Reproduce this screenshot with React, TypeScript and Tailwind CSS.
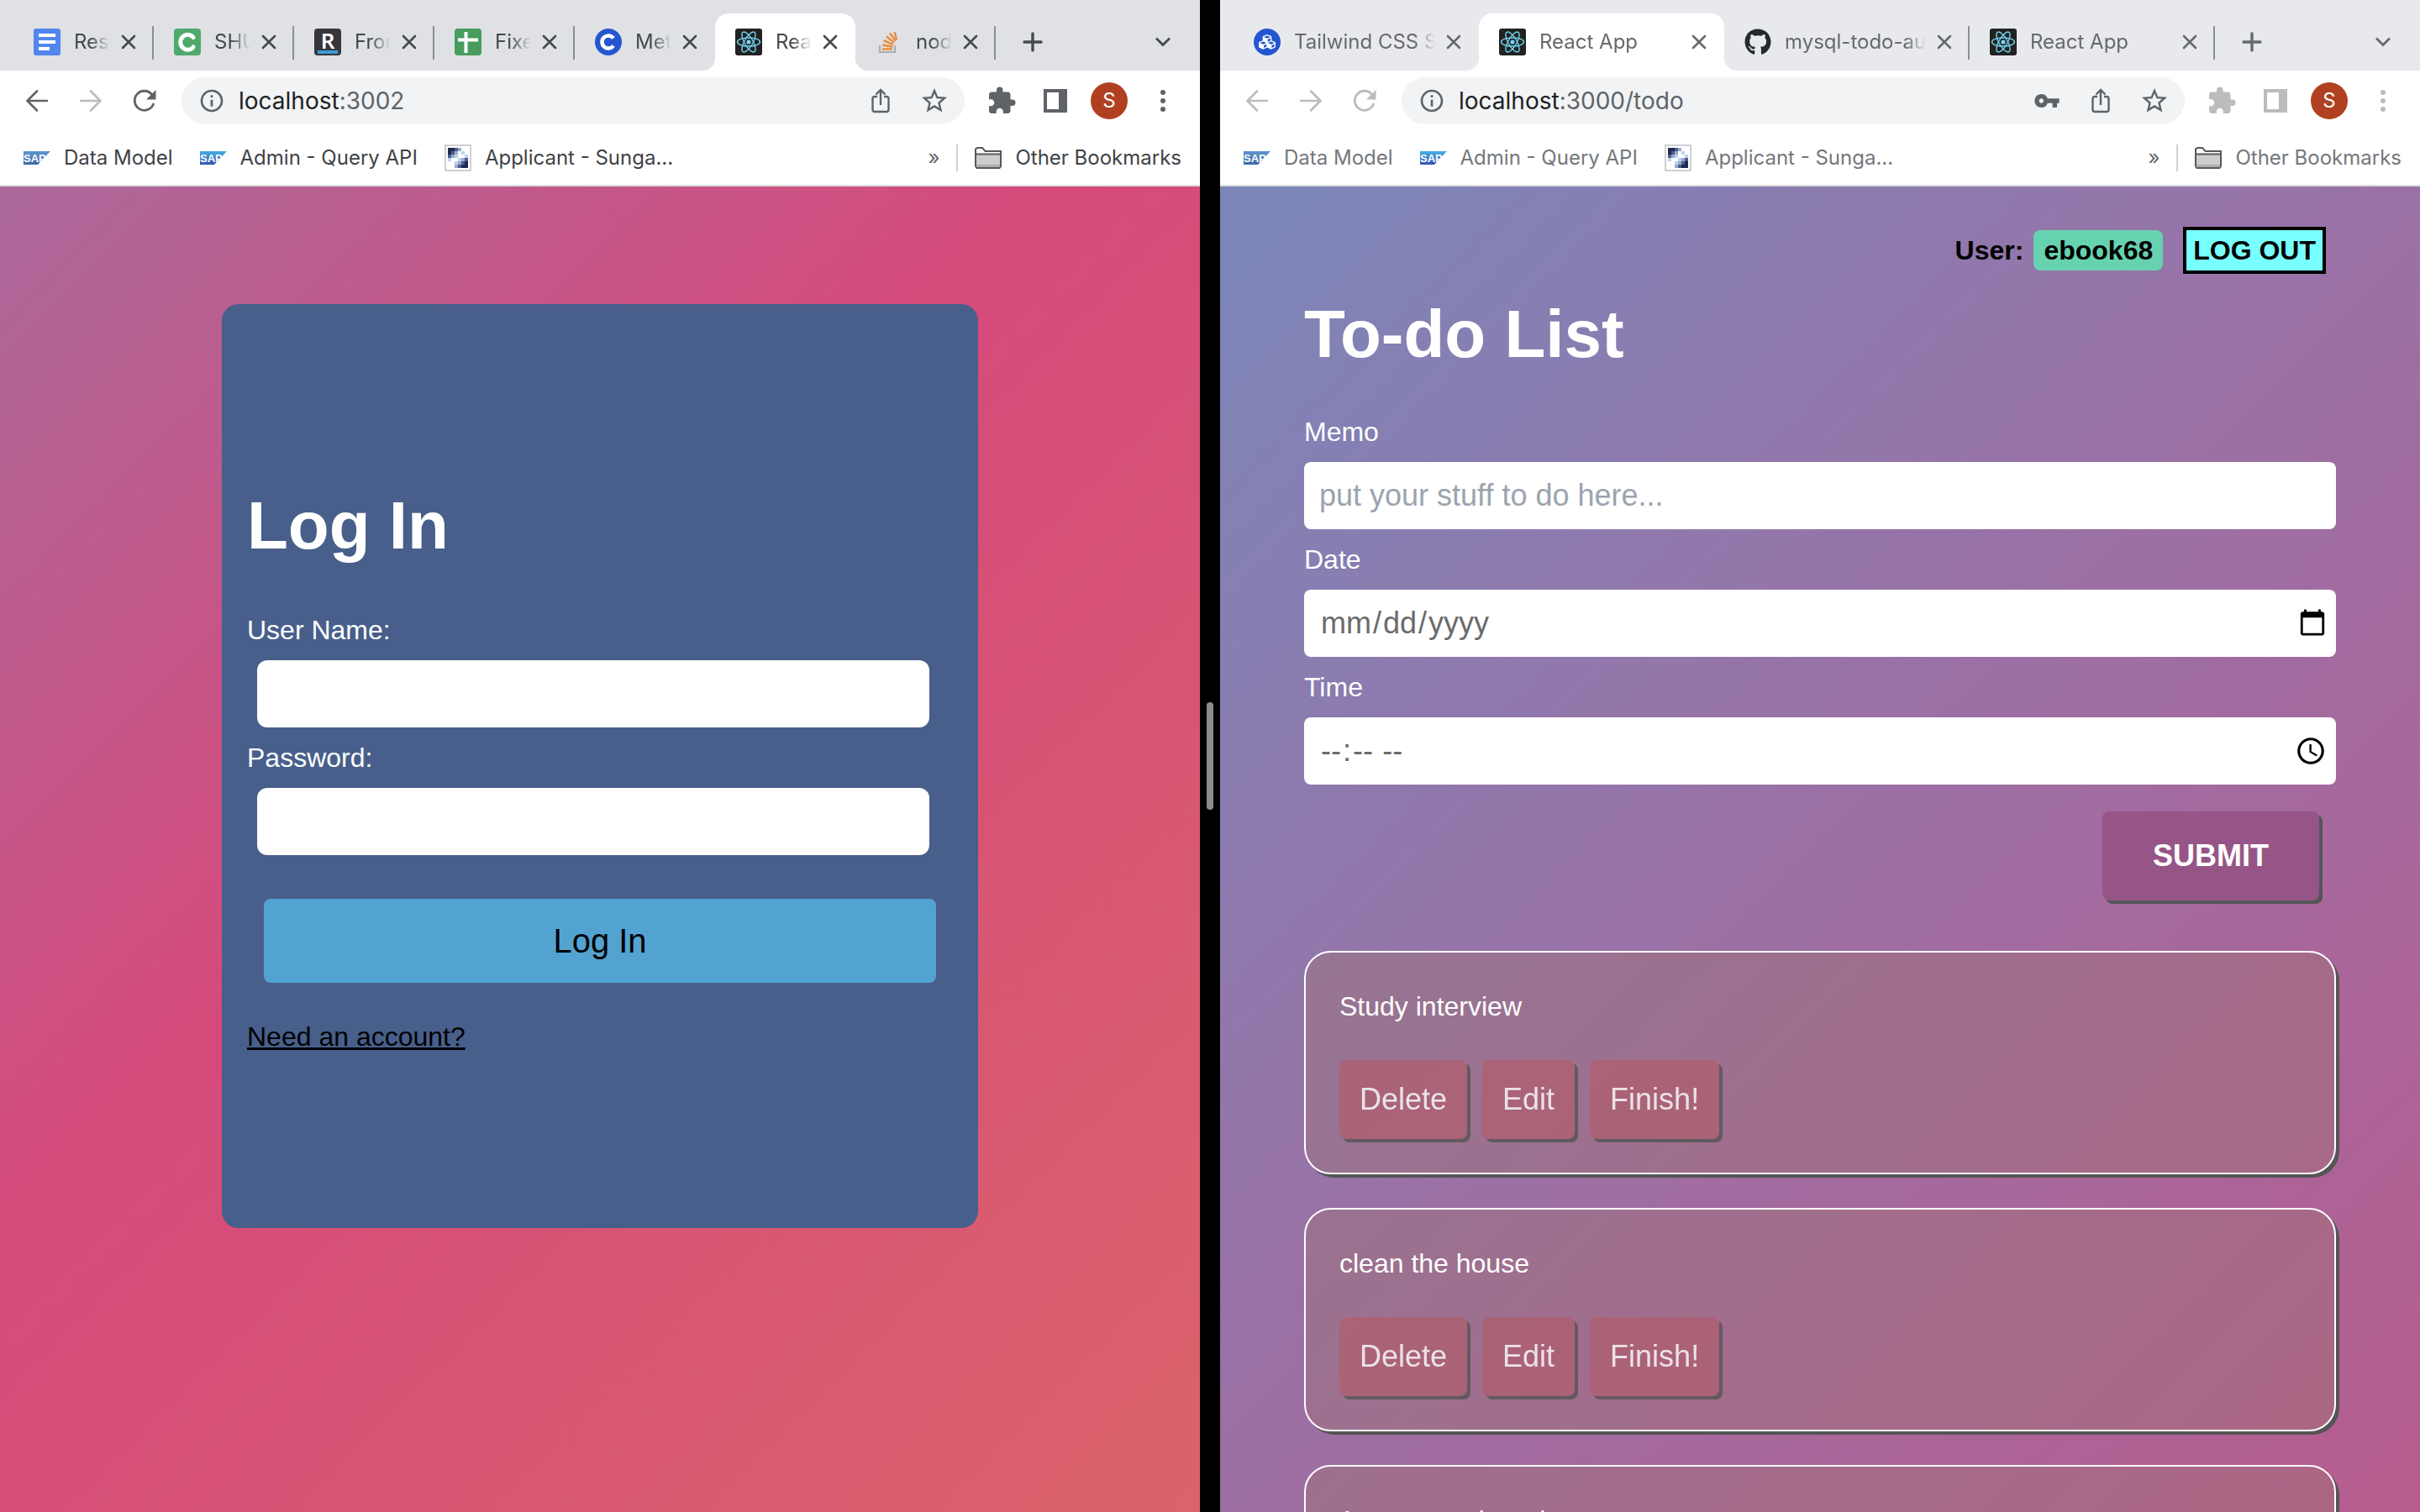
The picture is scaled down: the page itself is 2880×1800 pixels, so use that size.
import type { ReactNode } from "react";
import { FaCubes, FaGithub } from "react-icons/fa";
import { MdExtension, MdInfoOutline, MdStarBorder, MdVpnKey } from "react-icons/md";

type Tab = { title: string; icon: ReactNode; active?: boolean; divider?: boolean };

/* ---------- favicons ---------- */

function DocsIcon() {
  return (
    <svg viewBox="0 0 32 32" className="size-8">
      <rect width="32" height="32" rx="3" fill="#5286ec" />
      <path d="M6 8h20M6 16h20M6 24h13" stroke="#fff" strokeWidth="4" />
    </svg>
  );
}

function GreenCIcon() {
  return (
    <svg viewBox="0 0 32 32" className="size-8">
      <rect width="32" height="32" rx="4" fill="#50a96c" />
      <path d="M23 10.5A8.6 9 0 1 0 23 22" fill="none" stroke="#fff" strokeWidth="5" strokeLinecap="round" />
    </svg>
  );
}

function RIcon() {
  return (
    <span className="flex size-8 flex-col items-center justify-center rounded-sm bg-[#35373b] font-['Noto_Sans',sans-serif] text-[26px] leading-6 font-semibold text-white">
      R
      <span className="h-1 w-6 bg-[#3f9ad6]" />
    </span>
  );
}

function SheetIcon() {
  return (
    <svg viewBox="0 0 32 32" className="size-8">
      <rect width="32" height="32" rx="4" fill="#489c5e" />
      <path d="M13.500 4v25M4 13.500h24" stroke="#fff" strokeWidth="4" />
    </svg>
  );
}

function BlueCIcon() {
  return (
    <svg viewBox="0 0 32 32" className="size-8">
      <circle cx="16" cy="16" r="16" fill="#2456cf" />
      <path d="M22 11.500A7.500 7.500 0 1 0 22 20.500" fill="none" stroke="#fff" strokeWidth="4.500" />
    </svg>
  );
}

function ReactIcon() {
  return (
    <svg viewBox="0 0 32 32" className="size-8">
      <rect width="32" height="32" rx="3" fill="#222" />
      <g fill="none" stroke="#73d5f4" strokeWidth="1.400">
        <ellipse cx="16" cy="16" rx="13.500" ry="5" />
        <ellipse cx="16" cy="16" rx="13.500" ry="5" transform="rotate(60 16 16)" />
        <ellipse cx="16" cy="16" rx="13.500" ry="5" transform="rotate(120 16 16)" />
      </g>
      <circle cx="16" cy="16" r="2.600" fill="#73d5f4" />
    </svg>
  );
}

function StackIcon() {
  return (
    <svg viewBox="0 0 32 32" className="size-8" fill="none">
      <path d="M5 20v8h18v-8" stroke="#a9adb2" strokeWidth="2.200" />
      <g stroke="#ea8c3c" strokeWidth="2.400">
        <path d="M8 24.500h12" />
        <path d="M8.300 19.500l12 2.300" />
        <path d="M9.600 14.200l11.200 5" />
        <path d="M12.800 9.200l9.200 7.600" />
        <path d="M17 5.600l7 9.200" />
        <path d="M22.500 4l2.700 9.500" />
      </g>
    </svg>
  );
}

function CubesIcon() {
  return (
    <span className="flex size-8 items-center justify-center rounded-full bg-[#2456cf] text-white">
      <FaCubes className="size-5" />
    </span>
  );
}

/* ---------- toolbar icons ---------- */

function Arrow({ back }: { back?: boolean }) {
  return (
    <svg viewBox="0 0 28 28" className="size-7" fill="none" stroke="currentColor" strokeWidth="2.600" strokeLinecap="round">
      {back ? <path d="M26 14H3M14 2.500L2.500 14L14 25.500" /> : <path d="M2 14h23M14 2.500L25.500 14L14 25.500" />}
    </svg>
  );
}

function Reload() {
  return (
    <svg viewBox="0 0 28 28" className="size-7" fill="none">
      <path d="M24.500 18A11.500 11.500 0 1 1 22.800 6.600" stroke="currentColor" strokeWidth="2.800" strokeLinecap="round" />
      <path d="M27.500 1v11.500H16z" fill="currentColor" />
    </svg>
  );
}

function Share() {
  return (
    <svg viewBox="0 0 24 30" className="h-[30px] w-6" fill="none" stroke="currentColor" strokeWidth="2.400">
      <path d="M8 10H5a2.500 2.500 0 0 0-2.500 2.500v13A2.500 2.500 0 0 0 5 28h14a2.500 2.500 0 0 0 2.500-2.500v-13A2.500 2.500 0 0 0 19 10h-3" />
      <path d="M12 20V2.500M6.500 7.500L12 2l5.500 5.500" />
    </svg>
  );
}

function SidePanel() {
  return (
    <svg viewBox="0 0 28 28" className="size-7">
      <path fill="currentColor" fillRule="evenodd" d="M0 0h28v28H0zM4 4v20h14V4z" />
    </svg>
  );
}

function Dots() {
  return (
    <svg viewBox="0 0 28 28" className="size-7" fill="currentColor">
      <circle cx="14" cy="4" r="3" />
      <circle cx="14" cy="14" r="3" />
      <circle cx="14" cy="24" r="3" />
    </svg>
  );
}

/* ---------- bookmark icons ---------- */

function Sap({ id, rough }: { id: string; rough?: boolean }) {
  return (
    <svg viewBox="0 0 32 16" className="h-4 w-8">
      <defs>
        <linearGradient id={id} x1="0" y1="0" x2="0" y2="1">
          <stop offset="0" stopColor={rough ? "#5f95cf" : "#45b0e6"} />
          <stop offset="1" stopColor={rough ? "#3f68a6" : "#3553b0"} />
        </linearGradient>
      </defs>
      <path d="M0 0h32L17 16H0z" fill={`url(#${id})`} />
      <text x="0" y="13" fontFamily="Liberation Sans, sans-serif" fontWeight="700" fontSize="13" fill="#fff">
        SAP
      </text>
    </svg>
  );
}

const MOSAIC = ["443200", "432010", "321001", "100123", "001234", "002344"];
const MOSAIC_FILL = ["#ffffff", "#b9d3f0", "#9aa9c9", "#4a5f92", "#1f2b52"];

function Mosaic() {
  return (
    <svg viewBox="0 0 32 32" className="size-8">
      <rect x="1" y="1" width="30" height="30" fill="#fff" stroke="#cfd0d2" strokeWidth="2" />
      {MOSAIC.flatMap((row, y) =>
        [...row].map((c, x) => (
          <rect key={`${x}-${y}`} x={4 + x * 4} y={4 + y * 4} width="4" height="4" fill={MOSAIC_FILL[Number(c)]} />
        )),
      )}
    </svg>
  );
}

function Folder() {
  return (
    <svg viewBox="0 0 32 26" className="h-[26px] w-8">
      <path d="M1 23V2.500L3 1h6l3.500 4H31v18l-1.500 2H2.500z" fill="#fff" stroke="#55585c" strokeWidth="2" />
      <path d="M2 9h28v12H2z" fill="#cdcdcd" />
      <path d="M2 21h28v3H2z" fill="#aeaeae" />
      <path d="M1 8.500h30" stroke="#55585c" strokeWidth="2" />
    </svg>
  );
}

/* ---------- browser chrome ---------- */

function IconButton({ label, children, className = "" }: { label: string; children: ReactNode; className?: string }) {
  return (
    <button type="button" aria-label={label} className={`flex h-14 w-16 shrink-0 items-center justify-center ${className}`}>
      {children}
    </button>
  );
}

function BrowserTab({ tab, widthClass }: { tab: Tab; widthClass: string }) {
  return (
    <li
      className={`relative flex h-[68px] items-center pr-[18px] pl-6 ${widthClass} ${
        tab.active
          ? "rounded-t-2xl bg-white before:absolute before:bottom-0 before:-left-4 before:size-4 before:bg-[radial-gradient(circle_at_0_0,transparent_16px,white_17px)] after:absolute after:-right-4 after:bottom-0 after:size-4 after:bg-[radial-gradient(circle_at_100%_0,transparent_16px,white_17px)]"
          : ""
      }`}
    >
      <span className="shrink-0">{tab.icon}</span>
      <span className="mr-2.5 ml-4 min-w-0 flex-1 overflow-hidden whitespace-nowrap [mask-image:linear-gradient(to_right,black_calc(100%-24px),transparent)]">
        {tab.title}
      </span>
      <button type="button" aria-label={`Close ${tab.title}`} className="flex size-6 shrink-0 items-center justify-center">
        <svg viewBox="0 0 18 18" className="size-[18px]" stroke="currentColor" strokeWidth="2.600" strokeLinecap="round">
          <path d="M2 2l14 14M16 2L2 16" />
        </svg>
      </button>
      {tab.divider && <span className="absolute top-[15px] right-0 h-10 w-0.5 bg-[#8b8e92]" />}
    </li>
  );
}

type BrowserProps = {
  focused?: boolean;
  tabs: Tab[];
  tabWidth: string;
  host: string;
  path: string;
  hasKey?: boolean;
  idPrefix: string;
  children: ReactNode;
};

function Browser({ focused, tabs, tabWidth, host, path, hasKey, idPrefix, children }: BrowserProps) {
  const dim = focused ? "text-[#5f6368]" : "text-[#babcbe]";
  return (
    <section className="flex h-full min-w-0 flex-1 flex-col overflow-hidden bg-white font-['Inter',sans-serif]">
      <div
        className={`flex h-[84px] shrink-0 items-end pr-3 pl-4 text-2xl ${
          focused ? "bg-[#dfe1e5] text-[#45494d]" : "bg-[#e8e9ed] text-[#66696d]"
        }`}
      >
        <ul className="flex">
          {tabs.map((tab, i) => (
            <BrowserTab key={i} tab={tab} widthClass={tabWidth} />
          ))}
        </ul>
        <div className="flex h-[68px] flex-1 items-center justify-between pl-3">
          <IconButton label="New tab">
            <svg viewBox="0 0 24 24" className="size-6" stroke="currentColor" strokeWidth="3.400" strokeLinecap="round">
              <path d="M12 2v20M2 12h20" />
            </svg>
          </IconButton>
          <IconButton label="Search tabs">
            <svg viewBox="0 0 20 12" className="h-3 w-5" fill="none" stroke="currentColor" strokeWidth="2.800">
              <path d="M2 1.500l8 8 8-8" />
            </svg>
          </IconButton>
        </div>
      </div>

      <div className={`flex h-[72px] shrink-0 items-center gap-3 px-3 ${dim}`}>
        <div className="flex">
          <IconButton label="Back">
            <Arrow back />
          </IconButton>
          <IconButton label="Forward" className="text-[#babcbe]">
            <Arrow />
          </IconButton>
          <IconButton label="Reload">
            <Reload />
          </IconButton>
        </div>
        <div className="flex h-14 min-w-0 flex-1 items-center rounded-full bg-[#f1f3f4] px-1 text-[#5f6368]">
          <IconButton label="Site information">
            <MdInfoOutline className="size-8" />
          </IconButton>
          <span className="flex-1 text-[28px] leading-9">
            <span className="text-[#202124]">{host}</span>
            {path}
          </span>
          {hasKey && (
            <IconButton label="Passwords">
              <MdVpnKey className="size-8" />
            </IconButton>
          )}
          <IconButton label="Share">
            <Share />
          </IconButton>
          <IconButton label="Bookmark this page">
            <MdStarBorder className="size-9" />
          </IconButton>
        </div>
        <div className="flex">
          <IconButton label="Extensions">
            <MdExtension className="size-9" />
          </IconButton>
          <IconButton label="Side panel">
            <SidePanel />
          </IconButton>
          <IconButton label="Profile">
            <span className="flex size-11 items-center justify-center rounded-full bg-[#b04120] text-2xl text-white">S</span>
          </IconButton>
          <IconButton label="Menu">
            <Dots />
          </IconButton>
        </div>
      </div>

      <nav
        className={`flex h-[66px] shrink-0 items-center gap-8 border-b-2 border-[#dcdee1] pr-[22px] pl-7 text-2xl ${
          focused ? "text-[#3f4246]" : "text-[#74777b]"
        }`}
      >
        <a href="#data-model" className="flex items-center gap-4">
          <Sap id={`${idPrefix}-sap-a`} rough />
          Data Model
        </a>
        <a href="#admin" className="flex items-center gap-4">
          <Sap id={`${idPrefix}-sap-b`} />
          Admin - Query API
        </a>
        <a href="#applicant" className="flex flex-1 items-center gap-4 whitespace-nowrap">
          <Mosaic />
          Applicant - Sunga...
        </a>
        <div className="flex items-center gap-5">
          <button type="button" aria-label="More bookmarks" className="text-[#5f6368]">
            »
          </button>
          <span className="h-8 w-0.5 bg-[#cfd1d4]" />
          <a href="#other" className="flex items-center gap-4">
            <Folder />
            Other Bookmarks
          </a>
        </div>
      </nav>

      {children}
    </section>
  );
}

/* ---------- pages ---------- */

function LoginPage() {
  const field = "mx-3 my-3 h-20 w-[800px] max-w-full rounded-xl bg-white px-4 text-4xl text-black";
  return (
    <main className="flex flex-1 flex-col items-center bg-[linear-gradient(135deg,#ab699b_0%,#d64a7b_42%,#da646a_100%)] pt-[140px] font-['Liberation_Sans',Arial,sans-serif] text-[32px] leading-[48px] text-white">
      <form className="flex min-h-[1100px] w-[900px] flex-col items-start justify-center rounded-[20px] bg-[#485f8b] px-[30px]">
        <h1 className="mb-10 py-5 text-[80px] leading-[80px] font-bold">Log In</h1>
        <label htmlFor="username">User Name:</label>
        <input id="username" type="text" className={field} />
        <label htmlFor="password">Password:</label>
        <input id="password" type="password" className={field} />
        <button type="button" className="my-10 h-[100px] w-[800px] self-center rounded-lg bg-[#52a3d1] text-[40px] text-black">
          Log In
        </button>
        <a href="#signup" className="text-black underline">
          Need an account?
        </a>
      </form>
    </main>
  );
}

function TodoCard({ text }: { text: string }) {
  const action = "rounded-lg bg-[#ae6071] px-6 py-5 text-4xl leading-[54px] opacity-80 shadow-[4px_4px_0_#555]";
  return (
    <li className="rounded-[32px] border-2 border-white bg-[#9d7370]/40 p-10 shadow-[4px_4px_0_#555]">
      <p>{text}</p>
      <div className="mt-10 flex gap-[18px]">
        <button type="button" className={action}>
          Delete
        </button>
        <button type="button" className={action}>
          Edit
        </button>
        <button type="button" className={action}>
          Finish!
        </button>
      </div>
    </li>
  );
}

function TodoPage() {
  const field = "my-3 h-20 w-full rounded-lg bg-white pr-2 pl-[18px] text-4xl placeholder:text-[#9ca3af]";
  const picker =
    "text-[#6b6b6b] [&::-webkit-datetime-edit-month-field]:px-0.5 [&::-webkit-datetime-edit-day-field]:px-0.5 [&::-webkit-datetime-edit-year-field]:px-0.5 [&::-webkit-datetime-edit-hour-field]:px-0.5 [&::-webkit-datetime-edit-minute-field]:px-0.5 [&::-webkit-datetime-edit-ampm-field]:px-0.5";
  return (
    <main className="min-h-0 flex-1 overflow-hidden bg-[linear-gradient(135deg,#7b87b9_0%,#9c70a5_50%,#b75c8e_100%)] px-[100px] pt-12 font-['Liberation_Sans',Arial,sans-serif] text-[32px] leading-[48px] text-white">
      <div className="flex items-center justify-end pr-3 font-bold text-black">
        <span>User:</span>
        <span className="ml-3 rounded-lg bg-[#67d2b0] px-3">ebook68</span>
        <button type="button" className="ml-6 border-4 border-black bg-[#78ffff] px-2">
          LOG OUT
        </button>
      </div>
      <h1 className="mt-8 mb-[52px] text-[80px] leading-[80px] font-bold">To-do List</h1>
      <form className="flex flex-col">
        <label htmlFor="memo">Memo</label>
        <input id="memo" type="text" placeholder="put your stuff to do here..." className={`${field} text-black`} />
        <label htmlFor="date">Date</label>
        <input id="date" type="date" className={`${field} ${picker}`} />
        <label htmlFor="time">Time</label>
        <input id="time" type="time" className={`${field} ${picker}`} />
        <button
          type="button"
          className="mt-5 mr-5 mb-[60px] self-end rounded-lg bg-[#965586] px-[60px] py-[26px] text-4xl leading-[54px] font-bold shadow-[4px_4px_0_#555]"
        >
          SUBMIT
        </button>
      </form>
      <ul className="flex flex-col gap-10">
        <TodoCard text="Study interview" />
        <TodoCard text="clean the house" />
        <TodoCard text="1 message here in" />
      </ul>
    </main>
  );
}

const LEFT_TABS: Tab[] = [
  { title: "Resume", icon: <DocsIcon />, divider: true },
  { title: "SHUbert", icon: <GreenCIcon />, divider: true },
  { title: "Frontend", icon: <RIcon />, divider: true },
  { title: "Fixed", icon: <SheetIcon />, divider: true },
  { title: "Methods", icon: <BlueCIcon /> },
  { title: "React App", icon: <ReactIcon />, active: true },
  { title: "node.js", icon: <StackIcon />, divider: true },
];

const RIGHT_TABS: Tab[] = [
  { title: "Tailwind CSS Setup", icon: <CubesIcon /> },
  { title: "React App", icon: <ReactIcon />, active: true },
  { title: "mysql-todo-auth", icon: <FaGithub className="size-8 text-[#24292f]" />, divider: true },
  { title: "React App", icon: <ReactIcon />, divider: true },
];

export default function App() {
  return (
    <div className="flex h-screen overflow-hidden bg-black">
      <Browser focused tabs={LEFT_TABS} tabWidth="w-[167px]" host="localhost" path=":3002" idPrefix="left">
        <LoginPage />
      </Browser>
      <div className="flex w-6 shrink-0 items-center justify-center">
        <span className="h-32 w-2 rounded-full bg-[#8e8c88]" />
      </div>
      <Browser tabs={RIGHT_TABS} tabWidth="w-[292px]" host="localhost" path=":3000/todo" hasKey idPrefix="right">
        <TodoPage />
      </Browser>
    </div>
  );
}
